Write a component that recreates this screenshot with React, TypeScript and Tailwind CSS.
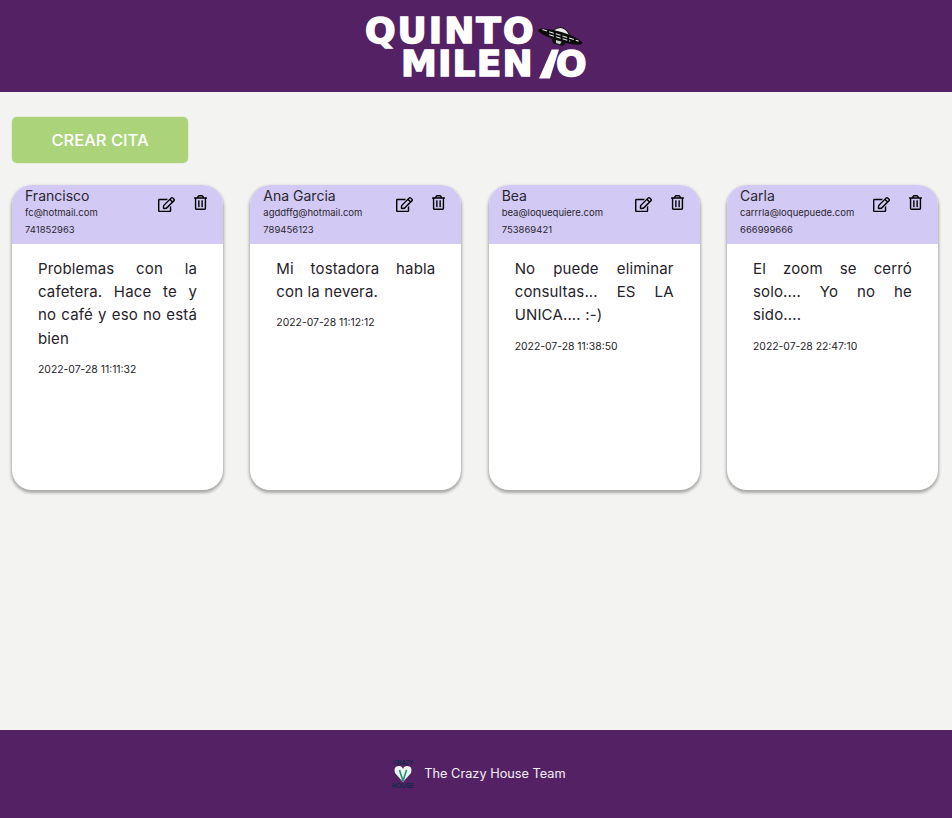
import React from "react";
import { FaRegEdit, FaRegTrashAlt } from "react-icons/fa";

const citas = [
  {
    nombre: "Francisco",
    email: "fc@hotmail.com",
    telefono: "741852963",
    texto: "Problemas con la cafetera. Hace te y no café y eso no está bien",
    fecha: "2022-07-28 11:11:32",
  },
  {
    nombre: "Ana Garcia",
    email: "agddffg@hotmail.com",
    telefono: "789456123",
    texto: "Mi tostadora habla con la nevera.",
    fecha: "2022-07-28 11:12:12",
  },
  {
    nombre: "Bea",
    email: "bea@loquequiere.com",
    telefono: "753869421",
    texto: "No puede eliminar consultas... ES LA UNICA.... :-)",
    fecha: "2022-07-28 11:38:50",
  },
  {
    nombre: "Carla",
    email: "carrrla@loquepuede.com",
    telefono: "666999666",
    texto: "El zoom se cerró solo.... Yo no he sido....",
    fecha: "2022-07-28 22:47:10",
  },
];

// platillo volante del logo
function Ufo() {
  return (
    <svg viewBox="0 0 46 26" className="absolute left-[172px] top-[10px] w-[46px] h-[26px]">
      <g transform="rotate(17 23 13)">
        <path d="M14 9 Q23 -2 32 9 Z" fill="#ececec" stroke="#111" strokeWidth="1" />
        <ellipse cx="23" cy="12.5" rx="23" ry="4.6" fill="#0a0a0a" />
        <path d="M4 11 L42 11.5 M12 14 L34 14" stroke="#e4e4e4" strokeWidth="1.1" strokeDasharray="5 2" />
        <path d="M15 16 L31 16 L28 21 L18 21 Z" fill="#111" />
        <path d="M20 17 L26 17 L25 20 L21 20 Z" fill="#cfcfcf" />
      </g>
    </svg>
  );
}

function Logo() {
  return (
    <div className="relative w-[224px] h-[64px] font-['DejaVu_Sans',sans-serif] font-bold text-white text-[36px] leading-[33px] [-webkit-text-stroke:1.5px_white]">
      <div className="tracking-[2px]">QUINTO</div>
      <div className="pl-[36px] flex items-center tracking-[1.2px]">
        MILEN
        <svg viewBox="0 0 22 32" className="w-[20px] h-[30px] ml-[5px] -mr-[3px] shrink-0">
          <path d="M14 0 L22 0 L12 32 L0 32 Z" fill="#fff" />
        </svg>
        O
      </div>
      <Ufo />
    </div>
  );
}

function Tarjeta({ cita }: { cita: (typeof citas)[number] }) {
  return (
    <div className="w-[211px] h-[305px] rounded-[20px] bg-white overflow-hidden shadow-[0_2px_3px_1px_rgba(0,0,0,0.3)]">
      <div className="h-[59px] bg-[#d2caf4] flex justify-between pl-[13px] pr-[15px] text-[#2a2630]">
        <div>
          <div className="text-sm leading-[22px]">{cita.nombre}</div>
          <div className="text-[9.5px] leading-[12px]">{cita.email}</div>
          <div className="text-[9.5px] leading-[12px] mt-[5px]">{cita.telefono}</div>
        </div>
        <div className="flex gap-[18px] pt-[11px] text-black">
          <FaRegEdit size={17} />
          <FaRegTrashAlt size={15} className="-mt-[1px]" />
        </div>
      </div>
      <div className="pl-[26px] pr-[26px] pt-[13px] text-[#26232b]">
        <p className="text-[15px] tracking-[0.15px] leading-[23.2px] text-justify">{cita.texto}</p>
        <p className="text-[10.4px] leading-[14px] mt-[13px]">{cita.fecha}</p>
      </div>
    </div>
  );
}

export default function App() {
  return (
    <main className="h-[818px] flex flex-col bg-[#f3f3f1] font-['Inter',sans-serif]">
      <header className="h-[92px] bg-[#542264] flex justify-center pt-[14px] pl-[2px]">
        <Logo />
      </header>

      <section className="flex-1 pl-3 pr-[14px] pt-[25px]">
        <button className="block w-[176px] h-[46px] rounded-[5px] bg-[#abd47a] ring-1 ring-[#e3eed5] text-white text-[16.5px] font-medium">
          CREAR CITA
        </button>

        <div className="flex justify-between mt-[22px]">
          {citas.map((cita) => (
            <Tarjeta key={cita.nombre} cita={cita} />
          ))}
        </div>
      </section>

      <footer className="h-[88px] bg-[#542264] flex items-center justify-center gap-[9px] pl-[5px]">
        <svg viewBox="0 0 24 32" className="w-[24px] h-[32px]">
          <text x="12" y="7" textAnchor="middle" fontSize="6.5" fontWeight="700" fill="#0d2a4a" textLength="20" lengthAdjust="spacingAndGlyphs" fontFamily="Liberation Sans, sans-serif">CRAZY</text>
          <path d="M12 24 L4 15 Q2 8 8 8 Q11 8 12 11 Q13 8 16 8 Q22 8 20 15 Z" fill="#eef6f2" />
          <path d="M12 23 L8.5 12 M12 23 L15.5 12" stroke="#1d8f7a" strokeWidth="1.6" />
          <text x="12" y="30" textAnchor="middle" fontSize="6.5" fontWeight="700" fill="#0d2a4a" textLength="22" lengthAdjust="spacingAndGlyphs" fontFamily="Liberation Sans, sans-serif">HOUSE</text>
        </svg>
        <span className="text-[12.75px] text-[#f3eef5]">The Crazy House Team</span>
      </footer>
    </main>
  );
}
